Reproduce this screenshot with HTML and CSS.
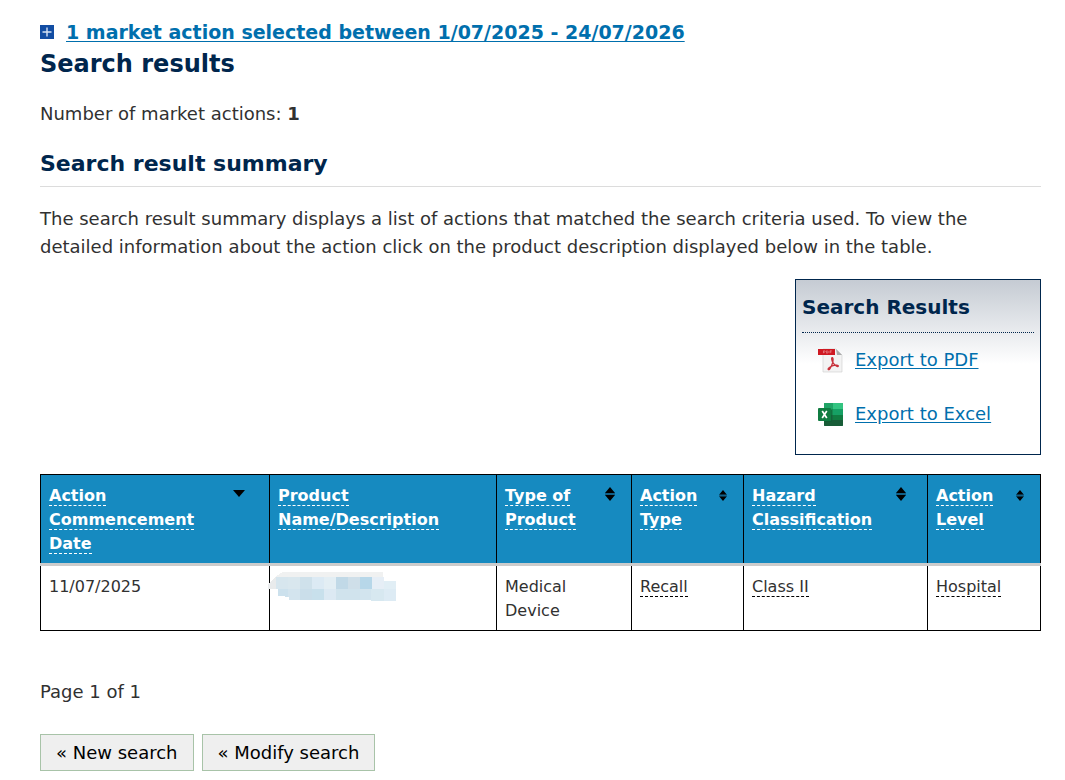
FILE: index.html
```
<!DOCTYPE html>
<html lang="en">
<head>
  <meta charset="UTF-8">
  <title>Search results</title>
  <meta name="viewport" content="width=device-width, initial-scale=1.0">
  <link rel="stylesheet" href="styles.css">
</head>
<body>
  <main class="page">
    <div class="criteria">
      <svg class="plus-icon" viewBox="0 0 14 14" aria-hidden="true">
        <rect width="14" height="14" fill="#124da3"/>
        <path d="M7 2.5v9M2.5 7h9" stroke="#d5e2f5" stroke-width="1.4"/>
      </svg>
      <a href="#">1 market action selected between 1/07/2025 - 24/07/2026</a>
    </div>
    <h1>Search results</h1>
    <p class="count">Number of market actions: <strong>1</strong></p>

    <h2>Search result summary</h2>
    <p class="intro">The search result summary displays a list of actions that matched the search criteria used. To view the detailed information about the action click on the product description displayed below in the table.</p>

    <aside class="export-box">
      <h3>Search Results</h3>
      <ul>
        <li>
          <svg class="file-icon" viewBox="0 0 25 25" aria-hidden="true">
            <path d="M5 1h13l6 6v17H5z" fill="#f3f3f3" stroke="#d2d2d2" stroke-width=".7"/>
            <path d="M18 1l6 6h-5z" fill="#aaa"/>
            <rect y="1" width="17" height="6" fill="#cf1922"/>
            <path d="M5.5 5.2V2.8h1.2q1 .7 0 1.4H5.5M8.6 2.8v2.4q2.2-.2 1.8-1.4Q10 2.8 8.6 2.8M12 5.2V2.8h1.8M12 4h1.5" fill="none" stroke="#f2b9bb" stroke-width=".5"/>
            <path d="M10.4 21.6c-1.2-.8 1.5-3.1 4.7-4 2.8-.8 5.5-.4 5.2.5-.3 1.2-3.4-.5-5-2.9-1.5-2.2-2.2-5.3-1.1-5.5 1.2-.2 1.1 3.2.1 6.1-1 2.8-2.8 6.5-3.9 5.8z" fill="none" stroke="#c8313b" stroke-width="1.3"/>
          </svg>
          <a href="#">Export to PDF</a>
        </li>
        <li>
          <svg class="file-icon" viewBox="0 0 25 25" aria-hidden="true">
            <rect x="6" y="1" width="19" height="23" rx="1" fill="#168a50"/>
            <path d="M7 1h8v6H6V2q0-1 1-1z" fill="#20a366"/>
            <path d="M15 1h9q1 0 1 1v5H15z" fill="#33c481"/>
            <path d="M15 7h10v6H15z" fill="#16a064"/>
            <path d="M6 13h9v5H6z" fill="#176b40"/>
            <path d="M15 13h10v5H15z" fill="#107c41"/>
            <path d="M6 18h19v5q0 1-1 1H7q-1 0-1-1z" fill="#185c37"/>
            <path d="M12 8h2v12H6v-1h6z" fill="#0e5c33" opacity=".55"/>
            <rect y="6" width="13" height="13" rx="1" fill="#107c41"/>
            <path d="M4.2 9l4.6 7M8.8 9l-4.6 7" stroke="#fff" stroke-width="1.7"/>
          </svg>
          <a href="#">Export to Excel</a>
        </li>
      </ul>
    </aside>

    <table class="results">
      <colgroup>
        <col class="col-date">
        <col class="col-name">
        <col class="col-product">
        <col class="col-action">
        <col class="col-hazard">
        <col class="col-level">
      </colgroup>
      <thead>
        <tr>
          <th scope="col"><div class="head"><span><a href="#">Action Commencement Date</a></span>
            <svg class="sort sort-down" viewBox="0 0 12 8" aria-hidden="true"><path d="M0 0h12L6 7z"/></svg></div></th>
          <th scope="col"><div class="head"><span><a href="#">Product Name/Description</a></span></div></th>
          <th scope="col"><div class="head"><span><a href="#">Type of Product</a></span>
            <svg class="sort" viewBox="0 0 10 14" aria-hidden="true"><path d="M5 0l5 6H0zM0 8h10l-5 6z"/><path class="sort-gap" d="M0 6h10v2H0z"/></svg></div></th>
          <th scope="col"><div class="head"><span><a href="#">Action Type</a></span>
            <svg class="sort sort-small" viewBox="0 0 10 14" aria-hidden="true"><path d="M5 0l5 6H0zM0 8h10l-5 6z"/><path class="sort-gap" d="M0 6h10v2H0z"/></svg></div></th>
          <th scope="col"><div class="head"><span><a href="#">Hazard Classification</a></span>
            <svg class="sort sort-wide" viewBox="0 0 10 14" aria-hidden="true"><path d="M5 0l5 6H0zM0 8h10l-5 6z"/><path class="sort-gap" d="M0 6h10v2H0z"/></svg></div></th>
          <th scope="col"><div class="head"><span><a href="#">Action Level</a></span>
            <svg class="sort sort-small" viewBox="0 0 10 14" aria-hidden="true"><path d="M5 0l5 6H0zM0 8h10l-5 6z"/><path class="sort-gap" d="M0 6h10v2H0z"/></svg></div></th>
        </tr>
      </thead>
      <tbody>
        <tr>
          <td>11/07/2025</td>
          <td class="masked">
            <svg class="mask" viewBox="0 0 128 29" shape-rendering="crispEdges" role="img" aria-label="Hidden product name">
              <path d="M0 12L8 4 15 0h100v5H8v12H0z" fill="#f0f1f1"/>
              <path d="M0 12l8-8v13H0z" fill="#e9ebec"/>
              <rect x="8" y="5" width="12" height="12" fill="#d7e6ee"/>
              <rect x="20" y="5" width="12" height="12" fill="#d9e7ee"/>
              <rect x="32" y="5" width="12" height="12" fill="#cfe1eb"/>
              <rect x="44" y="5" width="12" height="12" fill="#dceaf4"/>
              <rect x="56" y="5" width="12" height="12" fill="#e3eef4"/>
              <rect x="68" y="5" width="12" height="12" fill="#c1d9e7"/>
              <rect x="80" y="5" width="12" height="12" fill="#cfdfe9"/>
              <rect x="92" y="5" width="12" height="12" fill="#b7d7e9"/>
              <rect x="104" y="5" width="12" height="12" fill="#e6eef6"/>
              <rect x="116" y="9" width="12" height="8" fill="#e1eef5"/>
              <path d="M10 17h10v8h-3v-1h-7z" fill="#cce1ed"/>
              <path d="M20 17h12v11H21v-3h-1z" fill="#d3e4ee"/>
              <rect x="32" y="17" width="12" height="11" fill="#cadeea"/>
              <rect x="44" y="17" width="12" height="11" fill="#c8e0ec"/>
              <rect x="56" y="17" width="12" height="11" fill="#dce9f3"/>
              <rect x="68" y="17" width="24" height="11" fill="#d0e3ed"/>
              <rect x="92" y="17" width="11" height="11" fill="#d2e4ee"/>
              <rect x="103" y="17" width="13" height="12" fill="#d7e8f0"/>
              <rect x="116" y="17" width="12" height="12" fill="#ddebf4"/>
            </svg>
          </td>
          <td>Medical Device</td>
          <td><abbr>Recall</abbr></td>
          <td><abbr>Class II</abbr></td>
          <td><abbr>Hospital</abbr></td>
        </tr>
      </tbody>
    </table>

    <p class="paging">Page 1 of 1</p>

    <div class="buttons">
      <button type="button">« New search</button>
      <button type="button">« Modify search</button>
    </div>
  </main>
</body>
</html>
```
FILE: styles.css
```
* {
  box-sizing: border-box;
}
body {
  margin: 0;
  background: #fff;
  color: #313131;
  font-family: Verdana, "DejaVu Sans", sans-serif;
  font-size: 18px;
  line-height: 28px;
}
.page {
  padding: 18px 24px 8px 40px;
}
h1, h2, h3, p, ul {
  margin: 0;
}
h1, h2, h3 {
  color: #00264d;
}
a {
  color: #006fad;
  text-underline-offset: 2px;
}
.criteria {
  display: flex;
  align-items: center;
  gap: 12px;
  font-size: 19px;
  font-weight: bold;
}
.plus-icon {
  width: 14px;
  height: 14px;
  flex: none;
}
h1 {
  font-size: 24px;
  line-height: 36px;
}
.count {
  margin-top: 18px;
}
h2 {
  margin-top: 18px;
  padding-bottom: 4px;
  border-bottom: 1px solid #dcdcdc;
  font-size: 22px;
  line-height: 36px;
}
.intro {
  margin-top: 18px;
}
.export-box {
  width: 246px;
  margin: 18px 0 19px auto;
  padding: 6px 6px 26px;
  border: 1px solid #00264d;
  background: linear-gradient(#c5cbd3, #fff 84px);
}
.export-box h3 {
  padding-bottom: 4px;
  border-bottom: 1px dotted #00264d;
  font-size: 20px;
  line-height: 42px;
}
.export-box ul {
  display: grid;
  gap: 26px;
  padding: 13px 0 0 16px;
  list-style: none;
}
.export-box li {
  display: flex;
  align-items: center;
  gap: 12px;
}
.file-icon {
  width: 25px;
  height: 25px;
  flex: none;
}
.results {
  width: 100%;
  border-collapse: collapse;
  table-layout: fixed;
  font-size: 16px;
  line-height: 24px;
}
.col-date { width: 229px; }
.col-product { width: 135px; }
.col-action { width: 112px; }
.col-hazard { width: 184px; }
.col-level { width: 113px; }
.results th, .results td {
  border: 1px solid #000;
  padding: 9px 8px 7px;
  text-align: left;
  vertical-align: top;
}
.results th {
  background: #168ac0;
  border-bottom: 3px solid #ccc;
}
.results td {
  height: 66px;
}
.head {
  display: flex;
  align-items: flex-start;
  justify-content: space-between;
}
.head a {
  color: #fff;
  border-bottom: 1px dashed #fff;
  text-decoration: none;
}
.results abbr {
  border-bottom: 1px dashed #000;
}
.sort {
  width: 10px;
  height: 14px;
  margin: 3px 8px 0 0;
  flex: none;
}
.sort-down {
  width: 12px;
  height: 8px;
  margin: 6px 16px 0 0;
}
.sort-wide {
  margin-right: 13px;
}
.sort-small {
  width: 8px;
  height: 11px;
  margin-top: 6px;
}
.sort-gap {
  fill: #10618a;
}
.results .masked {
  padding: 6px 0;
}
.mask {
  display: block;
  width: 128px;
  height: 29px;
  margin-left: -2px;
}
.paging {
  margin-top: 47px;
}
.buttons {
  display: flex;
  gap: 8px;
  margin-top: 28px;
}
.buttons button {
  padding: 4px 15px;
  border: 1px solid #a8c3a8;
  background: #efefef;
  color: #000;
  font: inherit;
  line-height: 27px;
}
```
